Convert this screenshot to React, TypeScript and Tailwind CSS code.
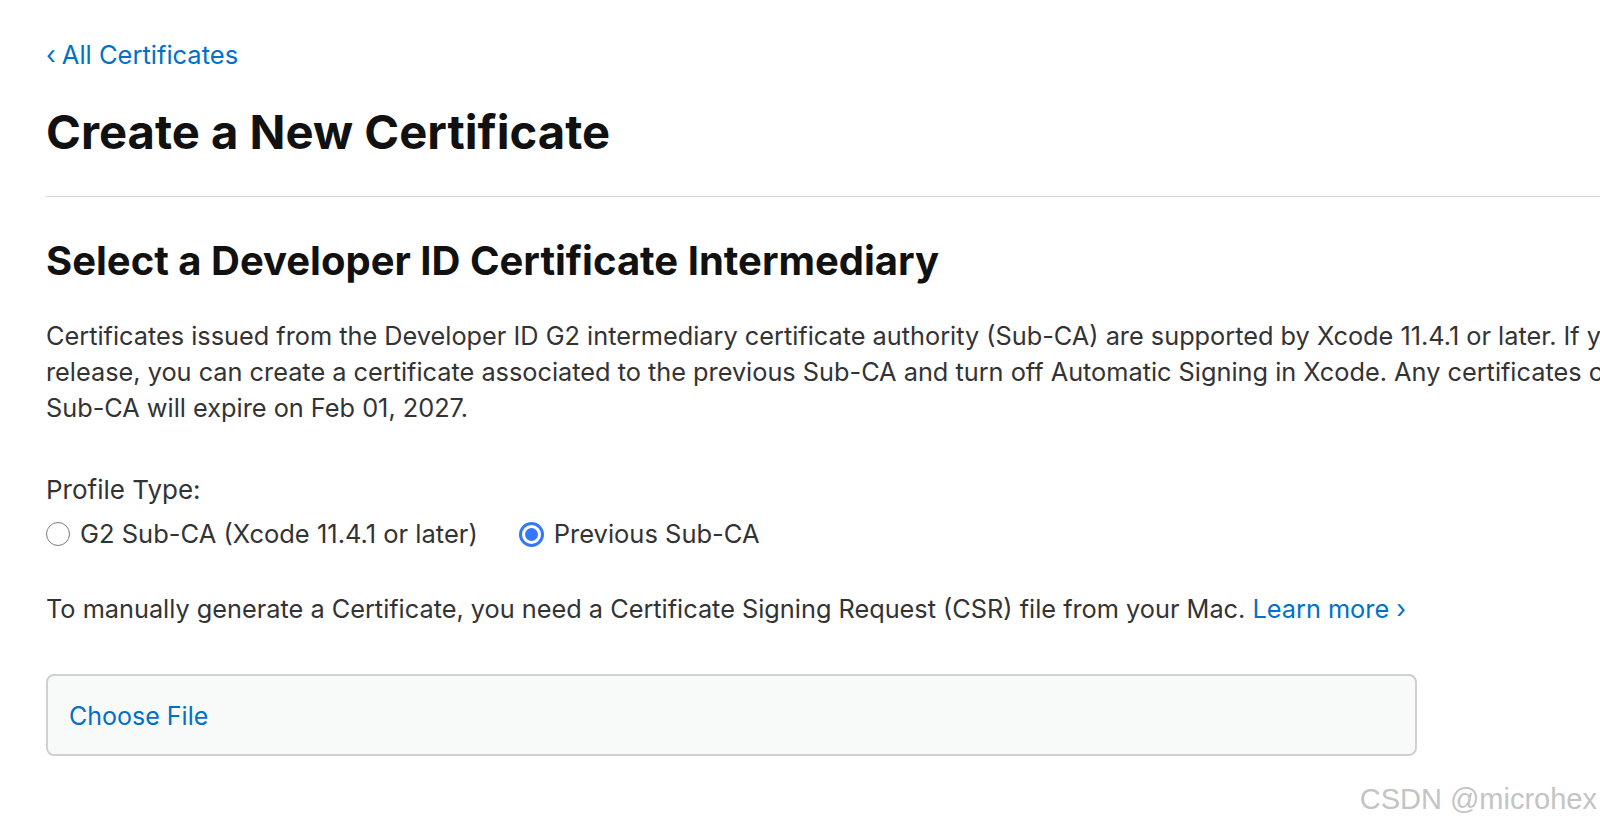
import React, { useState } from 'react';

const font = { fontFamily: 'Inter, "Noto Sans", sans-serif' };

interface RadioProps {
  label: string;
  checked: boolean;
  onSelect: () => void;
}

const Radio: React.FC<RadioProps> = ({ label, checked, onSelect }) => (
  <button onClick={onSelect} className="flex items-center gap-[10px] text-left">
    {checked ? (
      <span className="flex h-[25px] w-[25px] items-center justify-center rounded-full border-[3px] border-[#3478f6] bg-white">
        <span className="h-[13px] w-[13px] rounded-full bg-[#3478f6]"></span>
      </span>
    ) : (
      <span className="h-[24px] w-[24px] rounded-full border-[1.5px] border-[#7a7a7a] bg-white"></span>
    )}
    <span className="text-[25.5px] leading-[36px] text-[#333]">{label}</span>
  </button>
);

const App: React.FC = () => {
  const [profile, setProfile] = useState<'g2' | 'previous'>('previous');

  return (
    <div className="relative h-[828px] w-full overflow-hidden bg-white" style={font}>
      <div className="pl-[46px] pt-[40px]">
        {/* Back link */}
        <a href="#" className="block text-[25.5px] leading-[30px] text-[#0070c9]">
          <span className="mr-[6px]">‹</span>All Certificates
        </a>

        <h1 className="mt-[34px] text-[47.2px] font-bold leading-[56px] text-[#111]">
          Create a New Certificate
        </h1>

        <div className="mt-[36px] h-px w-[3000px] bg-[#d6d6d6]"></div>

        <h2 className="mt-[41px] text-[40px] font-bold leading-[46px] text-[#111]">
          Select a Developer ID Certificate Intermediary
        </h2>

        <p className="mt-[34px] whitespace-nowrap text-[25.3px] leading-[36px] text-[#333]">
          Certificates issued from the Developer ID G2 intermediary certificate authority (Sub-CA) are supported by Xcode 11.4.1 or later. If you need to use an earlier Xcode
          <br />
          release, you can create a certificate associated to the previous Sub-CA and turn off Automatic Signing in Xcode. Any certificates created with the previous
          <br />
          Sub-CA will expire on Feb 01, 2027.
        </p>

        {/* Profile type */}
        <div className="mt-[46px] text-[26px] leading-[36px] text-[#333]">Profile Type:</div>
        <div className="mt-[8px] flex items-center gap-[41px]">
          <Radio label="G2 Sub-CA (Xcode 11.4.1 or later)" checked={profile === 'g2'} onSelect={() => setProfile('g2')} />
          <Radio label="Previous Sub-CA" checked={profile === 'previous'} onSelect={() => setProfile('previous')} />
        </div>

        <p className="mt-[39px] whitespace-nowrap text-[25.3px] leading-[36px] text-[#333]">
          To manually generate a Certificate, you need a Certificate Signing Request (CSR) file from your Mac.{' '}
          <a href="#" className="text-[#0070c9]">
            Learn more ›
          </a>
        </p>

        {/* File chooser */}
        <div className="mt-[47px] flex h-[82px] w-[1371px] items-center rounded-[8px] border-2 border-[#d0d0d0] bg-[#f8f9f9] px-[21px] pt-[4px]">
          <span className="text-[25px] text-[#0070c9]">Choose File</span>
        </div>
      </div>

      {/* Watermark */}
      <div
        className="absolute bottom-[14px] right-[3px] text-[29px] leading-none text-[#c4c4c4] [text-shadow:0_0_1px_#fff]"
        style={{ fontFamily: '"Liberation Sans", Arial, sans-serif' }}
      >
        CSDN @microhex
      </div>
    </div>
  );
};

export default App;
